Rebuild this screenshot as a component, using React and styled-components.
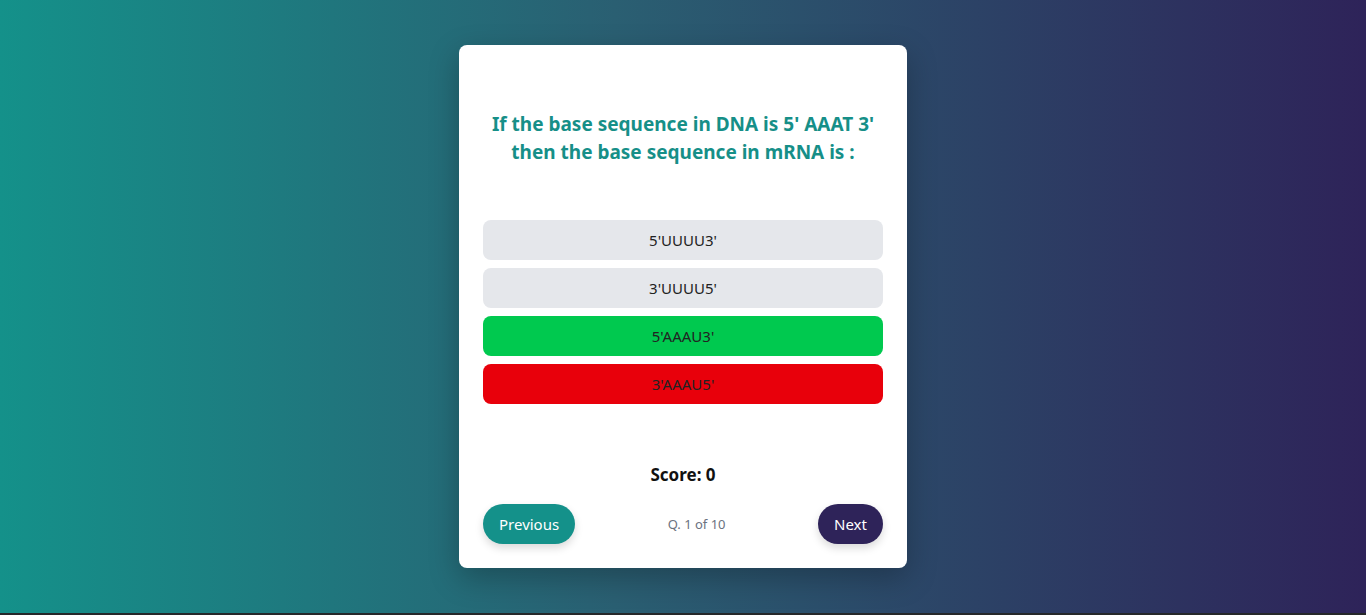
import React from "react";
import styled, { createGlobalStyle } from "styled-components";

const GlobalStyle = createGlobalStyle`
	html, body {
		margin: 0;
		padding: 0;
	}
	body {
		font-family: "Noto Sans", "Open Sans", sans-serif;
		background: #26282a;
		overflow: hidden;
	}
	* {
		box-sizing: border-box;
	}
`;

const Page = styled.div`
	height: 613px;
	display: flex;
	align-items: center;
	justify-content: center;
	background: linear-gradient(90deg, #14918a 0%, #2a5f72 45%, #2e2359 100%);
`;

const Card = styled.div`
	width: 448px;
	height: 523px;
	background: #fff;
	border-radius: 8px;
	padding: 24px;
	display: flex;
	flex-direction: column;
	box-shadow: 0 10px 30px rgba(0, 0, 0, 0.25);
`;

const Question = styled.h2`
	margin: 41px 0 0;
	color: #168f88;
	font-size: 19px;
	font-weight: 700;
	line-height: 28px;
	text-align: center;
`;

const Options = styled.div`
	display: flex;
	flex-direction: column;
	gap: 8px;
	margin-top: 54px;
`;

const bg = {
	idle: "#e5e7eb",
	correct: "#00c94f",
	wrong: "#e8000b",
};

const Option = styled.button`
	height: 40px;
	border: none;
	border-radius: 8px;
	background: ${(p) => bg[p.state]};
	color: #222;
	font-family: inherit;
	font-size: 15px;
	cursor: pointer;
`;

const Score = styled.div`
	margin-top: auto;
	text-align: center;
	font-size: 17px;
	font-weight: 700;
	line-height: 28px;
	color: #111;
`;

const Footer = styled.div`
	display: flex;
	align-items: center;
	justify-content: space-between;
	margin-top: 15px;
`;

const NavButton = styled.button`
	height: 40px;
	padding: 0 16px;
	border: none;
	border-radius: 999px;
	background: ${(p) => (p.variant === "next" ? "#2e2359" : "#14918a")};
	color: #fff;
	font-family: inherit;
	font-size: 15px;
	box-shadow: 0 4px 8px rgba(0, 0, 0, 0.15);
	cursor: pointer;
`;

const Counter = styled.span`
	color: #6b7280;
	font-size: 13px;
`;

const options = [
	{ label: "5'UUUU3'", state: "idle" },
	{ label: "3'UUUU5'", state: "idle" },
	{ label: "5'AAAU3'", state: "correct" },
	{ label: "3'AAAU5'", state: "wrong" },
];

export default function App() {
	return (
		<>
			<GlobalStyle />
			<Page>
				<Card>
					<Question>
						If the base sequence in DNA is 5' AAAT 3'
						<br />
						then the base sequence in mRNA is :
					</Question>
					<Options>
						{options.map((o) => (
							<Option key={o.label} state={o.state}>
								{o.label}
							</Option>
						))}
					</Options>
					<Score>Score: 0</Score>
					<Footer>
						<NavButton>Previous</NavButton>
						<Counter>Q. 1 of 10</Counter>
						<NavButton variant="next">Next</NavButton>
					</Footer>
				</Card>
			</Page>
		</>
	);
}
